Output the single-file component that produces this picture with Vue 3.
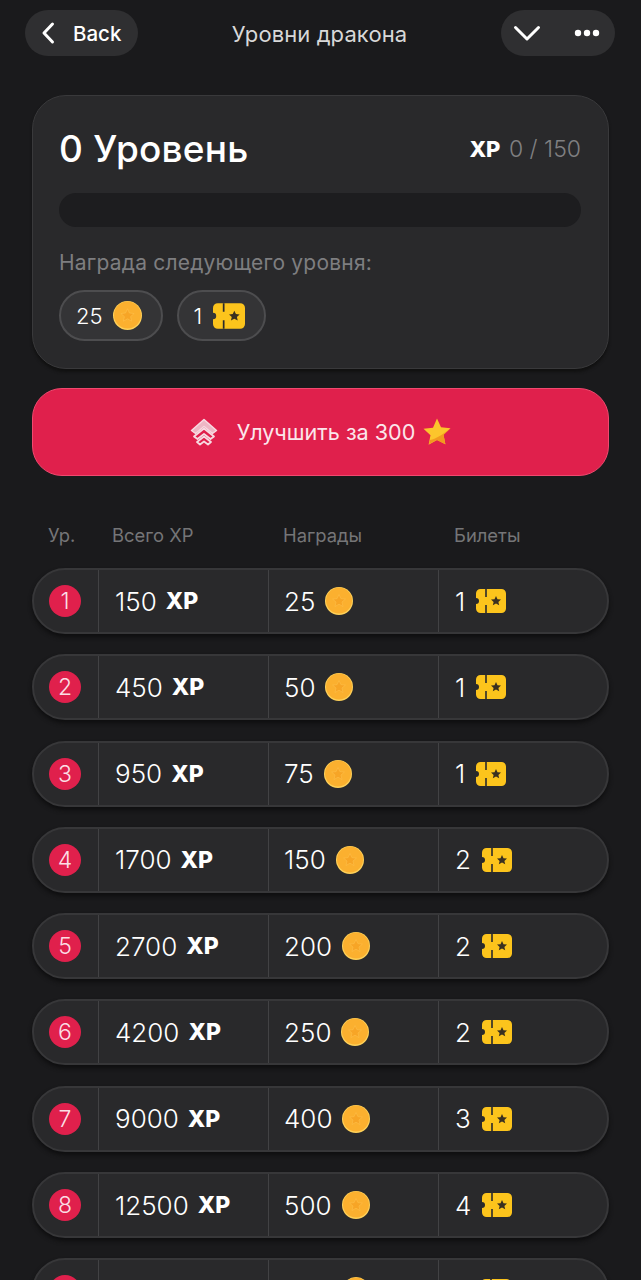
<script setup>
const levels = [
  { n: 1, xp: 150, coins: 25, tickets: 1 },
  { n: 2, xp: 450, coins: 50, tickets: 1 },
  { n: 3, xp: 950, coins: 75, tickets: 1 },
  { n: 4, xp: 1700, coins: 150, tickets: 2 },
  { n: 5, xp: 2700, coins: 200, tickets: 2 },
  { n: 6, xp: 4200, coins: 250, tickets: 2 },
  { n: 7, xp: 9000, coins: 400, tickets: 3 },
  { n: 8, xp: 12500, coins: 500, tickets: 4 },
  { n: 9, xp: 17000, coins: 600, tickets: 5 },
]
</script>

<template>
  <div class="page">
    <svg class="defs" width="0" height="0" aria-hidden="true">
      <defs>
        <symbol id="coin" viewBox="0 0 28 28">
          <circle cx="14" cy="14" r="14" fill="#fed15a" />
          <circle cx="14" cy="13.6" r="13" fill="#fbb02f" />
          <path d="M14 7.5l1.9 4.1 4.5.5-3.4 3 1 4.4-4-2.3-4 2.3 1-4.4-3.4-3 4.5-.5z" fill="#f7a526" stroke="#fdc04a" stroke-width=".6" />
        </symbol>
        <symbol id="ticket" viewBox="0 0 30 24">
          <path d="M4.5 0H25.5A4.5 4.5 0 0 1 30 4.500V19.500A4.500 4.500 0 0 1 25.500 24H4.500A4.500 4.500 0 0 1 0 19.500V15A3 3 0 0 0 0 9V4.500A4.500 4.500 0 0 1 4.500 0Z" fill="#fcc41c" />
          <path d="M10 0V8M10 16V24" stroke="#2a2a2c" stroke-width="1.6" />
          <path d="M20 7l1.500 3.200 3.500.4-2.600 2.300.8 3.400-3.200-1.800-3.200 1.800.8-3.400-2.600-2.300 3.500-.4z" fill="#3a3020" />
        </symbol>
      </defs>
    </svg>

    <header class="topbar">
      <button class="pill back">
        <svg width="14" height="24" viewBox="0 0 14 24" fill="none">
          <path d="M11.500 3L3 12l8.500 9" stroke="#fff" stroke-width="3" stroke-linecap="round" stroke-linejoin="round" />
        </svg>
        <span>Back</span>
      </button>
      <div class="title">Уровни дракона</div>
      <div class="pill actions">
        <svg width="28" height="18" viewBox="0 0 28 18" fill="none">
          <path d="M2.500 3.500L14 15 25.500 3.500" stroke="#fff" stroke-width="3" stroke-linecap="round" stroke-linejoin="round" />
        </svg>
        <svg width="26" height="8" viewBox="0 0 26 8" fill="#fff">
          <circle cx="4" cy="4" r="3.200" />
          <circle cx="13" cy="4" r="3.200" />
          <circle cx="22" cy="4" r="3.200" />
        </svg>
      </div>
    </header>

    <section class="card">
      <div class="card-head">
        <h1>0 Уровень</h1>
        <div class="progress-text"><b>XP</b> 0 / 150</div>
      </div>
      <div class="track"></div>
      <div class="next-label">Награда следующего уровня:</div>
      <div class="rewards">
        <div class="reward">
          <span>25</span>
          <svg class="coin" width="29" height="29"><use href="#coin" /></svg>
        </div>
        <div class="reward">
          <span>1</span>
          <svg class="ticket" width="32" height="26"><use href="#ticket" /></svg>
        </div>
      </div>
    </section>

    <button class="upgrade">
      <svg class="up-icon" width="30" height="30" viewBox="0 0 30 30" fill="none" stroke-linejoin="round" stroke-linecap="round">
        <path d="M2.500 13.500L15 2.500l12.500 11-4 3L15 9.500l-8.500 7z" fill="#eeb6c4" stroke="#f7dbe2" stroke-width="1.500" />
        <path d="M5 19.500L15 11.500l10 8-3.500 2.500-6.500-5-6.500 5z" fill="#e0204c" stroke="#f7dbe2" stroke-width="1.800" />
        <path d="M8 25L15 19.500 22 25l-3 2.500-4-3-4 3z" fill="#e0204c" stroke="#f7dbe2" stroke-width="1.800" />
      </svg>
      <span>Улучшить за 300</span>
      <svg width="30" height="30" viewBox="0 0 30 30">
        <path d="M15 1.500l4 8.700 9.500 1.100-7 6.500 1.900 9.400L15 22.900l-8.400 4.800 1.900-9.400-7-6.500 9.500-1.100z" fill="#fcc52c" />
        <path d="M28.500 11.300l-7 6.500 1.900 9.400L15 22.900 7 27l1-4c6-1 12-5 20.500-11.700z" fill="#f29a1f" />
      </svg>
    </button>

    <div class="cols">
      <span>Ур.</span>
      <span>Всего XP</span>
      <span>Награды</span>
      <span>Билеты</span>
    </div>

    <div class="rows">
      <div v-for="l in levels" :key="l.n" class="row">
        <div class="cell num"><span class="badge">{{ l.n }}</span></div>
        <div class="cell">{{ l.xp }} <b>XP</b></div>
        <div class="cell coins">
          {{ l.coins }}
          <svg class="coin" width="28" height="28"><use href="#coin" /></svg>
        </div>
        <div class="cell">
          {{ l.tickets }}
          <svg class="ticket" width="30" height="24"><use href="#ticket" /></svg>
        </div>
      </div>
    </div>
  </div>
</template>

<style>
html, body { background: #1a1a1c; }
</style>

<style scoped>
.page {
  height: 1280px;
  overflow: hidden;
  background: #1a1a1c;
  color: #fff;
  font-family: Inter, "Noto Sans", sans-serif;
  box-sizing: border-box;
  padding-top: 10px;
}
.defs { position: absolute; }
.topbar {
  display: flex;
  align-items: center;
  justify-content: space-between;
  padding: 0 26px 0 25px;
  height: 46px;
}
.pill {
  height: 46px;
  border-radius: 23px;
  background: #2f2f31;
  border: 0;
  color: #fff;
  display: flex;
  align-items: center;
  font-family: inherit;
  box-sizing: border-box;
}
.back {
  width: 113px;
  padding: 0 0 0 16px;
  gap: 18px;
  font-size: 20.500px;
  font-weight: 500;
}
.actions {
  width: 114px;
  padding: 0 15px 0 12px;
  justify-content: space-between;
}
.title {
  font-size: 22px;
  color: #d8d8d8;
  letter-spacing: 0.1px;
  padding-top: 2px;
}
.card {
  margin: 39px 32px 0;
  height: 274px;
  box-sizing: border-box;
  padding: 31px 27px 0 26px;
  background: #29292b;
  border: 1px solid #39393b;
  border-radius: 34px;
  box-shadow: 0 3px 3px #111;
}
.card-head {
  display: flex;
  justify-content: space-between;
  align-items: center;
}
h1 {
  margin: 0;
  font-size: 37px;
  line-height: 44px;
  font-weight: 500;
  letter-spacing: 0.2px;
}
.progress-text {
  font-size: 23px;
  color: #808082;
  font-weight: 300;
}
.progress-text b {
  color: #fff;
  font-size: 22px;
  font-weight: 800;
  margin-right: 2px;
}
.track {
  height: 34px;
  border-radius: 17px;
  background: #1d1d1f;
  margin-top: 22px;
}
.next-label {
  margin-top: 24px;
  font-size: 21px;
  line-height: 24px;
  letter-spacing: 0.2px;
  color: #7e7e80;
}
.rewards {
  display: flex;
  gap: 14px;
  margin-top: 15px;
}
.reward {
  height: 51px;
  box-sizing: border-box;
  display: flex;
  align-items: center;
  gap: 10px;
  padding: 0 19px 0 15px;
  border: 2px solid #4d4d4f;
  border-radius: 26px;
  background: #343436;
  font-size: 22px;
  font-weight: 300;
}
.reward .ticket { margin-left: 1px; }
.upgrade {
  display: flex;
  align-items: center;
  justify-content: center;
  gap: 16px;
  width: 577px;
  height: 88px;
  margin: 19px 32px 0;
  border: 1px solid #f0496f;
  border-radius: 30px;
  background: #e0204c;
  color: #fbe6eb;
  font-family: inherit;
  font-size: 21.600px;
  font-weight: 400;
  padding: 0;
}
.upgrade span { margin-right: -9px; }
.up-icon { margin-right: 2px; }
.cols {
  display: grid;
  grid-template-columns: 64px 171px 171px 1fr;
  margin: 48px 32px 0 48px;
  font-size: 18.400px;
  line-height: 22px;
  color: #757577;
}
.rows {
  display: flex;
  flex-direction: column;
  gap: 20.300px;
  margin: 22px 32px 0;
}
.row {
  display: grid;
  grid-template-columns: 64px 170px 170px 1fr;
  flex: none;
  height: 66px;
  box-sizing: border-box;
  background: #29292b;
  border: 2px solid #373739;
  border-radius: 33px;
  box-shadow: 0 3px 4px #0e0e0f;
}
.cell {
  display: flex;
  align-items: center;
  gap: 9px;
  padding-left: 16px;
  border-left: 1px solid #424244;
  font-size: 26px;
  font-weight: 300;
}
.coins { padding-left: 15px; }
.cell .coin { margin-left: 1px; }
.cell .ticket { margin-left: 2px; }
.cell b {
  font-size: 23px;
  font-weight: 800;
}
.num {
  border-left: 0;
  padding-left: 15px;
}
.badge {
  width: 32px;
  height: 32px;
  border-radius: 50%;
  background: #e0204c;
  display: flex;
  align-items: center;
  justify-content: center;
  font-size: 23px;
  color: #fbdfe5;
}
</style>
